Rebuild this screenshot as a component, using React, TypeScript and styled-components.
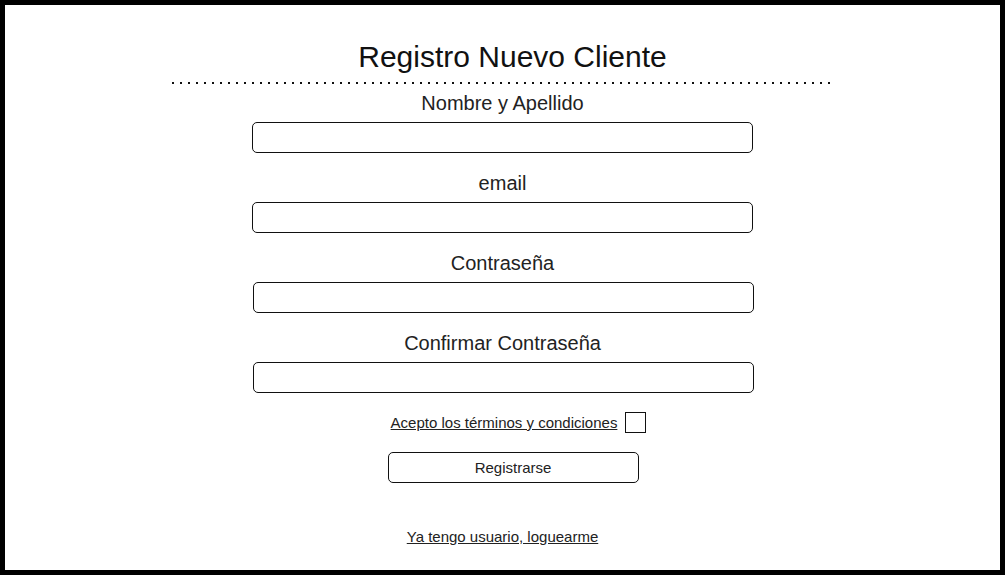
import styled, { createGlobalStyle } from "styled-components";

const GlobalStyle = createGlobalStyle`
  * { box-sizing: border-box; }
  html, body { margin: 0; padding: 0; background: #fff; }
  body { font-family: "Liberation Sans", Arial, sans-serif; color: #222; }
`;

type FieldProps = {
  label: string;
  type?: string;
  shift?: number;
};

const fields: FieldProps[] = [
  { label: "Nombre y Apellido" },
  { label: "email", type: "email" },
  { label: "Contraseña", type: "password", shift: 1 },
  { label: "Confirmar Contraseña", type: "password", shift: 1 },
];

function Field({ label, type = "text", shift = 0 }: FieldProps) {
  return (
    <Group>
      <Label>{label}</Label>
      <Input type={type} $shift={shift} />
    </Group>
  );
}

export default function App() {
  return (
    <>
      <GlobalStyle />
      <Frame>
        <Form onSubmit={(e) => e.preventDefault()}>
          <Title>Registro Nuevo Cliente</Title>
          <Dots />
          <Fields>
            {fields.map((f) => (
              <Field key={f.label} {...f} />
            ))}
          </Fields>
          <TermsRow>
            <TermsLink href="#">Acepto los términos y condiciones</TermsLink>
            <Check type="checkbox" />
          </TermsRow>
          <SubmitBtn type="submit">Registrarse</SubmitBtn>
          <LoginLink href="#">Ya tengo usuario, loguearme</LoginLink>
        </Form>
      </Frame>
    </>
  );
}

const Frame = styled.div`
  width: 1005px;
  height: 575px;
  border: 5px solid #000;
  background: #fff;
  overflow: hidden;
`;

const Form = styled.form`
  display: flex;
  flex-direction: column;
  align-items: center;
  padding-top: 35px;
`;

const Title = styled.h1`
  margin: 0 0 0 20px;
  font-size: 30px;
  line-height: 34px;
  font-weight: 400;
  color: #111;
`;

const Dots = styled.div`
  width: 660px;
  height: 2px;
  margin: 8px 0 0 -2px;
  background: repeating-linear-gradient(to right, #111 0 2px, transparent 2px 8px);
`;

const Fields = styled.div`
  display: flex;
  flex-direction: column;
  align-items: center;
  gap: 19px;
  margin-top: 8px;
`;

const Group = styled.div`
  display: flex;
  flex-direction: column;
  align-items: center;
  gap: 7px;
`;

const Label = styled.label`
  font-size: 20px;
  line-height: 23px;
  color: #222;
`;

const Input = styled.input<{ $shift: number }>`
  width: 501px;
  height: 31px;
  margin-left: ${({ $shift }) => $shift * 2}px;
  border: 1px solid #111;
  border-radius: 5px;
  padding: 0 8px;
  font: inherit;
  font-size: 15px;
  outline: none;
  background: #fff;
`;

const TermsRow = styled.div`
  display: flex;
  align-items: center;
  gap: 8px;
  margin: 19px 0 0 32px;
`;

const TermsLink = styled.a`
  font-size: 15px;
  line-height: 17px;
  color: #222;
  text-decoration: underline;
`;

const Check = styled.input`
  appearance: none;
  margin: 0;
  width: 21px;
  height: 21px;
  border: 1px solid #111;
  border-radius: 0;
  background: #fff;
`;

const SubmitBtn = styled.button`
  width: 251px;
  height: 31px;
  margin: 19px 0 0 21px;
  border: 1px solid #111;
  border-radius: 5px;
  background: #fff;
  font-family: "Liberation Sans", Arial, sans-serif;
  font-size: 15px;
  line-height: 17px;
  color: #222;
  padding: 0;
`;

const LoginLink = styled.a`
  margin-top: 45px;
  font-size: 15px;
  line-height: 17px;
  color: #222;
  text-decoration: underline;
`;
